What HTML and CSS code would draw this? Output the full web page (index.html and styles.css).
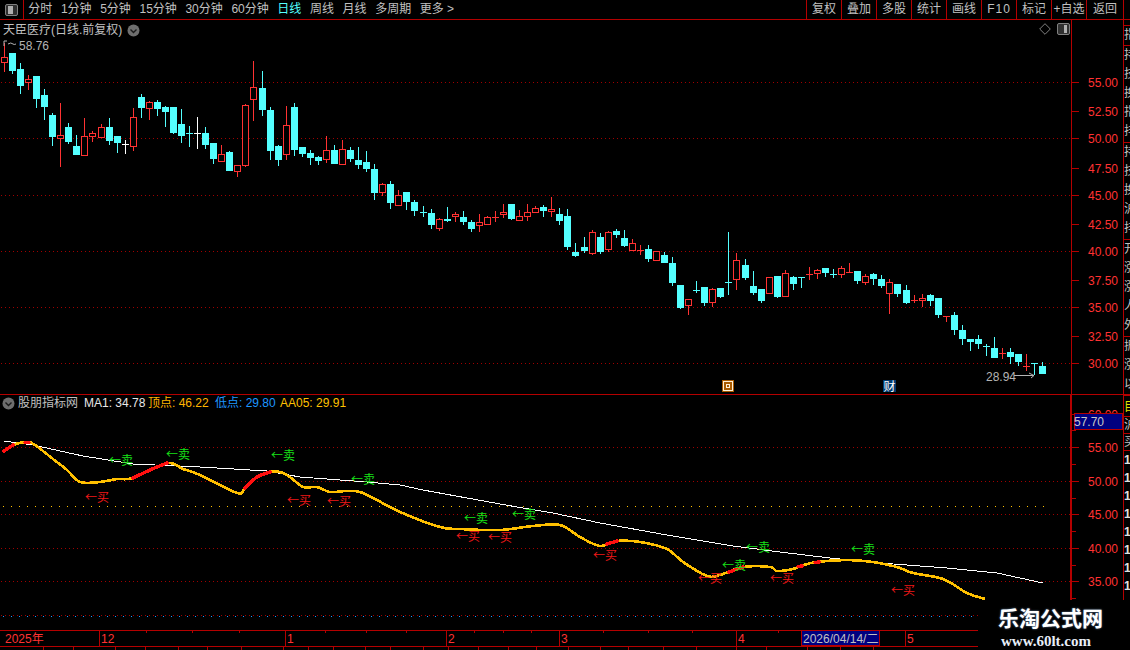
FILE: index.html
```html
<!DOCTYPE html>
<html lang="zh-CN">
<head>
    <meta charset="UTF-8">
    <title>天臣医疗 日线</title>
    <link rel="stylesheet" href="styles.css">
</head>
<body>
    <header class="topbar">
        <div class="toggle">
            <svg width="13" height="12" viewBox="0 0 13 12"><rect x="0.5" y="0.5" width="12" height="11" rx="1.5" class="toggle-frame"/><rect x="3" y="2" width="5" height="8" class="toggle-bar"/></svg>
        </div>
        <nav class="periods">
            <span>分时</span><span>1分钟</span><span>5分钟</span><span>15分钟</span><span>30分钟</span><span>60分钟</span>
            <span class="active">日线</span><span>周线</span><span>月线</span><span>多周期</span><span>更多 &gt;</span>
        </nav>
        <nav class="tools">
            <span>复权</span><span>叠加</span><span>多股</span><span>统计</span><span>画线</span><span class="spaced">F10</span><span>标记</span><span>+自选</span><span>返回</span>
        </nav>
    </header>

    <div class="workspace">
        <div class="panes">
            <section class="pane pane-price">
                <div class="pane-title">
                    <span>天臣医疗(日线.前复权)</span>
                    <svg class="chevron" width="13" height="13" viewBox="0 0 13 13"><circle cx="6.5" cy="6.5" r="6"/><path d="M3.5 5.5l3 3 3-3"/></svg>
                </div>
                <div class="corner-icons">
                    <svg width="12" height="12" viewBox="0 0 12 12"><path d="M6 .7L11.3 6 6 11.3 .7 6z" class="diamond"/></svg>
                    <svg width="13" height="12" viewBox="0 0 13 12"><rect x="0.5" y="0.5" width="12" height="11" rx="1.5" class="toggle-frame"/><rect x="7" y="2" width="3" height="8" class="toggle-bar"/></svg>
                </div>
                <svg id="priceChart" class="chart" viewBox="0 20 1072 374" width="1072" height="374"></svg>
                <svg id="priceAxis" class="axis" viewBox="1072 20 51 374" width="51" height="374"></svg>
            </section>

            <section class="pane pane-indicator">
                <div class="pane-title legend">
                    <svg class="chevron" width="13" height="13" viewBox="0 0 13 13"><circle cx="6.5" cy="6.5" r="6"/><path d="M3.5 5.5l3 3 3-3"/></svg>
                    <span class="legend-name">股朋指标网</span>
                    <span class="legend-ma">MA1: 34.78</span>
                    <span class="legend-top">顶点: 46.22</span>
                    <span class="legend-low">低点: 29.80</span>
                    <span class="legend-aa">AA05: 29.91</span>
                </div>
                <svg id="indicatorChart" class="chart" viewBox="0 395 1072 235" width="1072" height="235"></svg>
                <svg id="indicatorAxis" class="axis axis-thick" viewBox="1072 395 51 235" width="51" height="235"></svg>
            </section>

            <svg id="timeline" class="timeline" viewBox="0 630 1123 20" width="1123" height="20"></svg>
        </div>

        <aside class="side">
            <div class="side-cell side-first">指</div>
            <div class="side-cell">持<br>技<br>换<br>指<br>排</div>
            <div class="side-cell">持<br>技<br>换<br>沪<br>排</div>
            <div class="side-cell">开<br>涨<br>涨<br>人<br>外</div>
            <div class="side-cell side-last">振<br>涨<br>以</div>
            <div class="side-cell side-yellow">目</div>
            <div class="side-cell side-mini">沪</div>
            <div class="side-cell side-mini">买</div>
            <div class="side-ones">1<br>1<br>1<br>1<br>1<br>1<br>1<br>1</div>
        </aside>
    </div>

    <div class="watermark">
        <div class="watermark-cn">乐淘公式网</div>
        <div class="watermark-url">www.60lt.com</div>
    </div>

    <script src="chart.js"></script>
</body>
</html>
```
FILE: styles.css
```css
html, body {
    margin: 0;
    padding: 0;
    width: 1130px;
    height: 650px;
    overflow: hidden;
    background: #000;
}
body {
    position: relative;
    color: #c0c0c0;
    font-family: "Liberation Sans", "Noto Sans CJK SC", sans-serif;
    font-size: 12px;
}
.topbar {
    display: flex;
    height: 19px;
    border-bottom: 1px solid #b40000;
    line-height: 19px;
}
.toggle {
    display: flex;
    align-items: center;
    justify-content: center;
    width: 23px;
    border-right: 1px solid #b40000;
}
.toggle-frame {
    fill: #303030;
    stroke: #808080;
}
.toggle-bar {
    fill: #b0b0b0;
}
.periods {
    display: flex;
    padding-left: 0;
}
.periods span {
    padding: 0 4.3px;
}
.periods .active {
    color: #54ffff;
}
.tools {
    display: flex;
    margin-left: auto;
    margin-right: 6px;
}
.tools span {
    width: 34px;
    border-left: 1px solid #b40000;
    text-align: center;
}
.tools span:last-child {
    width: 36px;
    border-right: 1px solid #b40000;
}
.tools .spaced {
    letter-spacing: 1px;
}
.workspace {
    display: flex;
}
.panes {
    width: 1123px;
}
.pane {
    position: relative;
    display: flex;
}
.pane-price {
    border-bottom: 1px solid #b40000;
}
.chart, .axis, .timeline {
    display: block;
}
.axis {
    border-left: 1px solid #b40000;
    margin-left: -1px;
}
.axis-thick {
    border-left-width: 2px;
    margin-left: -2px;
}
.pane-title {
    position: absolute;
    top: 1px;
    left: 3px;
    display: flex;
    align-items: center;
    gap: 5px;
    line-height: 18px;
}
.chevron circle {
    fill: #6e6e6e;
}
.chevron path {
    fill: none;
    stroke: #1a1a1a;
    stroke-width: 1.4;
}
.corner-icons {
    position: absolute;
    top: 3px;
    left: 1039px;
    display: flex;
    gap: 6px;
}
.diamond {
    fill: none;
    stroke: #808080;
}
.legend {
    top: -1px;
    left: 2px;
    gap: 0;
}
.legend-name {
    margin-left: 3px;
    width: 66px;
}
.legend-ma {
    width: 64px;
    color: #e8e8e8;
}
.legend-top {
    width: 67px;
    color: #ffb400;
}
.legend-low {
    width: 65px;
    color: #1e96ff;
}
.legend-aa {
    color: #ffc000;
}
.price-label {
    fill: #ff3232;
    font-size: 12px;
}
.note-label {
    fill: #b4b4b4;
    font-size: 12px;
}
.tick {
    stroke: #b40000;
    shape-rendering: crispEdges;
}
.grid {
    stroke: #a00000;
    stroke-dasharray: 1 3;
    shape-rendering: crispEdges;
}
.grid-yellow {
    stroke: #ffc000;
    stroke-dasharray: 1 7;
    shape-rendering: crispEdges;
}
.grid-blue {
    stroke: #1e96ff;
    stroke-dasharray: 1 7;
    shape-rendering: crispEdges;
}
.wick-cyan, .body-cyan {
    fill: #54ffff;
    shape-rendering: crispEdges;
}
.wick-red {
    fill: #ff3232;
    shape-rendering: crispEdges;
}
.body-red {
    fill: #000;
    stroke: #ff3232;
    shape-rendering: crispEdges;
}
.wick-white {
    fill: #fff;
    shape-rendering: crispEdges;
}
.line-slow {
    fill: none;
    stroke: #fff;
    stroke-width: 1;
    shape-rendering: crispEdges;
}
.line-main {
    fill: none;
    stroke: #ffc000;
    stroke-width: 2.6;
    stroke-linejoin: round;
    shape-rendering: crispEdges;
}
.line-hot {
    fill: none;
    stroke: #ff1010;
    stroke-width: 3.4;
    stroke-linecap: round;
    shape-rendering: crispEdges;
}
.signal-sell, .signal-buy {
    font-family: "Noto Sans CJK SC", sans-serif;
    font-size: 12px;
}
.signal-sell {
    fill: #18e018;
}
.signal-buy {
    fill: #f01818;
}
.arrow {
    fill: none;
    stroke: #b4b4b4;
}
.marker-box {
    fill: #a85a00;
}
.marker-ring {
    fill: none;
    stroke: #fff0d8;
}
.marker-cai {
    fill: #003a70;
}
.marker-cai-text {
    fill: #fff;
    font-size: 12px;
}
.axis-date-box {
    fill: #000080;
    stroke: #b40000;
}
.axis-date {
    fill: #c0c0c0;
    font-size: 12px;
}
.axis-box {
    fill: #000080;
    stroke: #b40000;
}
.axis-box-text {
    fill: #c8c8c8;
    font-size: 12px;
}
.time-label {
    fill: #ff3232;
    font-size: 12px;
}
.side {
    width: 6px;
    border-left: 1px solid #b40000;
    overflow: hidden;
    padding-top: 5px;
    line-height: 19px;
    white-space: nowrap;
}
.side-cell {
    height: 96px;
    border-top: 1px solid #b40000;
}
.side-first {
    height: 19px;
}
.side-last {
    height: 57px;
    border-bottom: 2px solid #b40000;
}
.side-yellow {
    height: 18px;
    margin-top: 2px;
    color: #e0e000;
    border: 0;
}
.side-mini {
    height: 16px;
    line-height: 16px;
}
.side-ones {
    border-top: 1px solid #b40000;
    line-height: 18px;
    font-weight: bold;
    color: #e0e0e0;
}
.watermark {
    position: absolute;
    left: 978px;
    top: 600px;
    width: 152px;
    height: 50px;
    background: #000;
    color: #fff;
}
.watermark-cn {
    margin: 5px 0 0 20px;
    font-size: 21px;
    line-height: 28px;
    font-weight: bold;
    text-shadow: 0 0 2px #6a8ab0;
}
.watermark-url {
    margin: 1px 0 0 23px;
    font-family: "Liberation Serif", serif;
    font-size: 15px;
    line-height: 15px;
    font-weight: bold;
    color: #e8eef8;
}
```
FILE: chart.js
```js
// kind, high, body top, body bottom, low (y in page pixels)
const candles = [
    ['r',43,57,63,72],['c',53,53,71,74],['c',63,69,86,94],['r',75,79,83,90],['c',76,76,99,108],
    ['c',89,95,107,120],['c',113,115,137,146],['r',103,135,139,167],['c',123,127,142,144],['c',135,146,155,155],
    ['r',118,136,156,156],['r',131,133,137,142],['r',124,127,138,138],['c',118,127,141,145],['c',136,136,143,153],
    ['w',140,144,144,154],['r',108,117,147,151],['c',94,97,108,118],['r',101,102,109,120],['c',100,102,109,116],
    ['c',106,107,112,127],['c',107,107,133,134],['c',109,124,136,143],['c',126,133,133,147],['w',117,133,133,149],
    ['c',127,133,145,149],['c',143,143,159,164],['r',145,154,162,162],['c',151,152,171,171],['r',165,165,172,177],
    ['r',104,105,166,167],['r',61,87,100,121],['c',71,88,110,116],['c',107,110,151,160],['c',145,146,160,166],
    ['r',106,125,155,160],['c',103,107,150,156],['c',147,147,154,157],['c',150,153,158,165],['c',156,157,161,165],
    ['r',136,150,160,163],['c',145,150,164,164],
    ['r',140,149,165,165],['c',147,150,159,162],['c',147,160,165,169],['c',151,162,169,172],['c',164,169,193,200],
    ['r',183,184,193,196],['c',181,184,203,209],['r',190,195,206,206],['c',192,192,202,210],['c',200,202,211,216],
    ['c',206,212,212,217],['c',209,213,225,229],['r',218,219,229,231],['c',207,219,221,222],['r',212,214,217,222],
    ['c',211,217,222,225],['c',220,222,229,232],['r',214,222,226,232],['r',216,217,225,225],['r',211,217,217,222],
    ['r',204,212,215,218],['c',204,204,219,220],['r',210,216,221,221],['r',204,212,217,221],['r',206,208,213,213],
    ['c',205,207,211,217],['r',197,209,212,217],['c',208,214,221,225],['c',209,216,247,250],['c',243,252,256,257],
    ['c',237,247,251,253],['r',230,232,254,255],['c',233,237,252,254],['r',231,232,250,252],['c',229,231,235,238],
    ['c',230,238,246,247],['r',239,243,251,251],['r',245,250,250,255],['c',245,249,259,262],['r',251,251,261,261],
    ['c',252,255,263,263],['c',257,263,283,286],['c',285,285,308,309],['r',299,299,306,315],['c',281,290,290,293],
    ['c',287,287,303,306],['r',288,289,303,307],['c',288,288,297,298],['c',232,282,282,295],['r',253,260,280,290],
    ['c',259,265,278,280],['c',271,286,293,295],['c',289,289,301,303],['r',277,277,294,294],['c',276,276,297,298],
    ['r',270,273,297,297],['c',276,277,284,290],['c',277,277,277,288],['r',267,274,274,280],['r',269,270,274,279],
    ['c',268,268,273,277],['c',269,274,274,278],['r',266,268,275,278],['r',263,272,272,272],['c',271,271,281,284],
    ['r',274,276,283,285],['c',273,274,279,285],['c',275,279,286,288],['r',279,282,294,314],['c',284,284,294,297],
    ['c',285,290,303,304],['r',295,300,300,303],['r',294,298,301,307],['c',294,295,301,306],['c',298,298,315,318],
    ['r',316,316,316,322],['c',312,315,330,335],['c',325,330,339,345],['c',339,339,342,351],['c',335,339,344,349],
    ['c',344,346,346,356],['c',337,348,358,358],['r',348,353,353,359],['c',348,352,357,364],['c',354,354,362,366],
    ['r',354,366,366,371],['c',363,363,363,375],['c',362,366,374,374]
];

const slowLine = [[4,441],[33,445],[83,456],[133,464],[200,467],[267,471],[300,477],[367,482],[400,485],[423,490],
    [467,498],[517,507],[553,513],[600,523],[667,535],[733,546],[780,552],[830,558],[880,563],[947,568],[997,573],[1043,583]];

const mainLine = [[4,451],[13,445],[27,442],[35,445],[53,459],[67,470],[80,482],[100,482],[117,479],[133,478],[167,463],
    [183,469],[200,475],[237,493],[245,488],[257,477],[270,472],[280,472],[290,477],[303,487],[317,487],[330,492],[347,491],
    [363,493],[400,512],[440,527],[460,529],[500,530],[533,526],[560,525],[580,537],[600,546],[617,541],[640,542],[667,549],
    [683,562],[707,576],[720,575],[743,567],[770,567],[777,571],[793,569],[800,566],[817,562],[847,560],[873,562],[897,567],
    [913,573],[943,579],[967,593],[985,599]];

const hotLines = [
    [[4,451],[13,445]], [[25,442.5],[29,442.5]], [[133,478],[150,470],[167,463]],
    [[245,488],[257,477],[270,472]], [[607,544],[617,541]], [[729,572],[743,567]],
    [[798,566.5],[802,566]], [[815,562.5],[819,562]]
];

const sells = [[109,461],[166,455],[271,456],[351,480],[464,519],[512,515],[722,566],[746,548],[851,550]];
const buys = [[85,498],[287,501],[327,502],[456,537],[488,538],[593,556],[698,579],[770,579],[891,591]];

function el(parent, name, attrs, text) {
    const node = document.createElementNS('http://www.w3.org/2000/svg', name);
    for (const key in attrs) node.setAttribute(key, attrs[key]);
    if (text) node.textContent = text;
    parent.appendChild(node);
    return node;
}

function hline(svg, y, x1, x2, cls) {
    el(svg, 'line', { x1, x2, y1: y + 0.5, y2: y + 0.5, class: cls });
}

function pointsOf(list) {
    return list.map(p => p.join(',')).join(' ');
}

// Catmull-Rom through the read-off points, so the curve has no hard corners
function smoothPath(list) {
    let d = 'M' + list[0].join(' ');
    for (let i = 0; i < list.length - 1; i++) {
        const p0 = list[i - 1] || list[i];
        const p1 = list[i];
        const p2 = list[i + 1];
        const p3 = list[i + 2] || p2;
        const c1 = [p1[0] + (p2[0] - p0[0]) / 6, p1[1] + (p2[1] - p0[1]) / 6];
        const c2 = [p2[0] - (p3[0] - p1[0]) / 6, p2[1] - (p3[1] - p1[1]) / 6];
        d += 'C' + c1.join(' ') + ' ' + c2.join(' ') + ' ' + p2.join(' ');
    }
    return d;
}

function drawPrice(svg) {
    [82, 138, 195, 251, 307, 363].forEach(y => hline(svg, y, 1, 1072, 'grid'));
    candles.forEach((c, i) => {
        const [kind, high, top, bottom, low] = c;
        const x = Math.floor(4.4 + i * 8.05);
        const names = { c: 'cyan', r: 'red', w: 'white' };
        el(svg, 'rect', { x, y: high, width: 1, height: low - high, class: 'wick-' + names[kind] });
        if (top === bottom) {
            el(svg, 'rect', { x: x - 3, y: top, width: 7, height: 1, class: 'wick-' + names[kind] });
        } else if (kind === 'c') {
            el(svg, 'rect', { x: x - 3, y: top, width: 7, height: bottom - top, class: 'body-cyan' });
        } else {
            el(svg, 'rect', { x: x - 2.5, y: top + 0.5, width: 6, height: bottom - top - 1, class: 'body-red' });
        }
    });

    // high and low notes
    el(svg, 'text', { x: 19, y: 50, class: 'note-label' }, '58.76');
    el(svg, 'path', { d: 'M4 46V41h3M8 44q3-2 5 0q1 1 3 0', class: 'arrow' });
    el(svg, 'text', { x: 986, y: 381, class: 'note-label' }, '28.94');
    el(svg, 'path', { d: 'M1014 375.5H1034M1029 373l5 2.5-3 2.5', class: 'arrow' });

    // event markers
    el(svg, 'rect', { x: 722, y: 380, width: 12, height: 12, class: 'marker-box' });
    el(svg, 'rect', { x: 723.5, y: 381.5, width: 9, height: 9, class: 'marker-ring' });
    el(svg, 'rect', { x: 726.5, y: 384.5, width: 3, height: 3, class: 'marker-ring' });
    el(svg, 'rect', { x: 883, y: 380, width: 13, height: 12, class: 'marker-cai' });
    el(svg, 'text', { x: 883.5, y: 391, class: 'marker-cai-text' }, '财');
}

function drawIndicator(svg) {
    [447, 481, 514, 548, 581].forEach(y => hline(svg, y, 1, 1072, 'grid'));
    hline(svg, 506, 3, 1046, 'grid-yellow');
    hline(svg, 615, 1, 1072, 'grid');
    hline(svg, 616, 3, 1046, 'grid-blue');

    el(svg, 'polyline', { points: pointsOf(slowLine), class: 'line-slow' });
    el(svg, 'path', { d: smoothPath(mainLine), class: 'line-main' });
    hotLines.forEach(p => el(svg, 'path', { d: smoothPath(p), class: 'line-hot' }));

    sells.forEach(s => el(svg, 'text', { x: s[0], y: s[1] + 4, class: 'signal-sell' }, '←卖'));
    buys.forEach(b => el(svg, 'text', { x: b[0], y: b[1] + 4, class: 'signal-buy' }, '←买'));
}

function drawAxis(svg, labels, minors) {
    labels.forEach(l => {
        hline(svg, l[0], 1072, 1079, 'tick');
        el(svg, 'text', { x: 1088, y: l[0] + 5, class: 'price-label' }, l[1]);
    });
    minors.forEach(y => hline(svg, y, 1072, 1076, 'tick'));
}

function drawTimeline(svg) {
    hline(svg, 630, 0, 1123, 'tick');
    hline(svg, 646, 0, 1123, 'tick');
    const months = [[99, '12'], [285, '1'], [446, '2'], [559, '3'], [736, '4'], [905, '5']];
    months.forEach(m => {
        el(svg, 'line', { x1: m[0] + 0.5, x2: m[0] + 0.5, y1: 630, y2: 646, class: 'tick' });
        el(svg, 'text', { x: m[0] + 2, y: 643, class: 'time-label' }, m[1]);
    });
    el(svg, 'text', { x: 5, y: 643, class: 'time-label' }, '2025年');
    [146, 192, 239, 325, 366, 406, 474, 503, 531, 603, 648, 692, 778].forEach(x => {
        el(svg, 'line', { x1: x + 0.5, x2: x + 0.5, y1: 630, y2: 633, class: 'tick' });
    });
    el(svg, 'rect', { x: 801.5, y: 630.5, width: 78, height: 15, class: 'axis-date-box' });
    el(svg, 'text', { x: 803, y: 643, class: 'axis-date' }, '2026/04/14/二');
    [43, 73, 115, 145, 178, 207, 241, 283, 308, 333, 365, 390, 423, 448, 478, 508, 536, 568, 600, 628, 663, 696, 736, 766, 807, 840, 873].forEach(x => {
        el(svg, 'line', { x1: x + 0.5, x2: x + 0.5, y1: 647, y2: 650, class: 'tick' });
    });
}

drawPrice(document.getElementById('priceChart'));
drawIndicator(document.getElementById('indicatorChart'));
drawTimeline(document.getElementById('timeline'));

drawAxis(document.getElementById('priceAxis'),
    [[82, '55.00'], [111, '52.50'], [138, '50.00'], [168, '47.50'], [195, '45.00'], [224, '42.50'],
     [251, '40.00'], [280, '37.50'], [307, '35.00'], [336, '32.50'], [363, '30.00']], []);

const indicatorAxis = document.getElementById('indicatorAxis');
drawAxis(indicatorAxis,
    [[414, '60.00'], [447, '55.00'], [481, '50.00'], [514, '45.00'], [548, '40.00'], [581, '35.00']],
    [430, 464, 498, 531, 565, 598]);
el(indicatorAxis, 'rect', { x: 1074.5, y: 413.5, width: 48, height: 16, class: 'axis-box' });
el(indicatorAxis, 'text', { x: 1074, y: 426, class: 'axis-box-text' }, '57.70');
```
